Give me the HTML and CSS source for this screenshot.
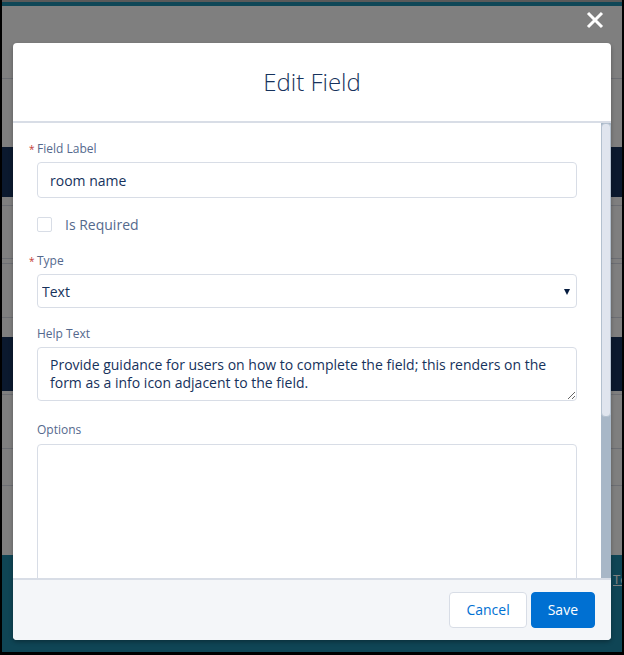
FILE: index.html
```html
<!DOCTYPE html>
<html lang="en">
<head>
<meta charset="utf-8">
<title>Edit Field</title>
<link rel="stylesheet" href="styles.css">
</head>
<body>
<div class="screen">
  <div class="page">
    <div class="pg-top"></div>
    <div class="pg-accent"></div>
    <div class="pg-row h72 lined"></div>
    <div class="pg-row h68"></div>
    <div class="pg-dark h50"></div>
    <div class="pg-row h8 lined"></div>
    <div class="pg-row h52 lined"></div>
    <div class="pg-row h4 lined"></div>
    <div class="pg-row h53 lined"></div>
    <div class="pg-row h19"></div>
    <div class="pg-dark h54"></div>
    <div class="pg-row h3 lined"></div>
    <div class="pg-row h53 lined"></div>
    <div class="pg-row h36 lined"></div>
    <div class="pg-row h69"></div>
    <div class="pg-footer"><a class="pg-link" href="#">Te</a></div>
    <div class="backdrop"></div>
  </div>

  <button class="modal-close" type="button" aria-label="Close">
    <svg width="18" height="18" viewBox="0 0 18 18" aria-hidden="true">
      <path d="M2 2 L16 16 M16 2 L2 16" stroke="#ffffff" stroke-width="3" fill="none"/>
    </svg>
  </button>

  <section class="modal" role="dialog" aria-labelledby="modal-title">
    <header class="modal-header">
      <h2 id="modal-title" class="modal-title">Edit Field</h2>
    </header>
    <div class="modal-body">
      <div class="modal-scroll">
        <div class="form">
          <label class="label" for="f-label"><abbr class="required" title="required">*</abbr>Field Label</label>
          <input id="f-label" class="input" type="text" value="room name">

          <div class="checkbox-row">
            <input id="f-req" class="checkbox" type="checkbox">
            <label for="f-req" class="checkbox-label">Is Required</label>
          </div>

          <label class="label gap-type" for="f-type"><abbr class="required" title="required">*</abbr>Type</label>
          <div class="select-wrap">
            <select id="f-type" class="select">
              <option>Text</option>
            </select>
            <span class="select-arrow"></span>
          </div>

          <label class="label gap-help" for="f-help">Help Text</label>
          <textarea id="f-help" class="textarea help">Provide guidance for users on how to complete the field; this renders on the form as a info icon adjacent to the field.</textarea>

          <label class="label gap-options" for="f-options">Options</label>
          <textarea id="f-options" class="textarea options"></textarea>
        </div>
      </div>
      <div class="scrollbar" aria-hidden="true">
        <div class="scrollbar-thumb"></div>
      </div>
    </div>
    <footer class="modal-footer">
      <button class="btn btn-neutral" type="button">Cancel</button>
      <button class="btn btn-brand" type="button">Save</button>
    </footer>
  </section>
</div>
</body>
</html>
```

FILE: styles.css
```css
html, body {
  margin: 0;
  padding: 0;
}

body {
  background: #000;
  font-family: "Open Sans", "Liberation Sans", sans-serif;
}

.screen {
  position: relative;
  width: 624px;
  height: 655px;
  box-sizing: border-box;
  padding: 0 2px 3px 2px;
  overflow: hidden;
}

/* ---------- page behind the modal ---------- */
.page {
  position: relative;
  height: 652px;
  background: #fff;
  display: flex;
  flex-direction: column;
}

.pg-top { height: 2px; background: #b4b4b4; flex: none; }
.pg-accent { height: 4px; background: #1f8fae; flex: none; }
.pg-row { flex: none; background: #fff; }
.pg-row.lined { border-bottom: 1px solid #d8dde6; }
.pg-dark { flex: none; background: #16335c; }

.h3 { height: 3px; }
.h4 { height: 4px; }
.h8 { height: 8px; }
.h19 { height: 19px; }
.h36 { height: 36px; }
.h50 { height: 50px; }
.h52 { height: 52px; }
.h53 { height: 53px; }
.h54 { height: 54px; }
.h68 { height: 68px; }
.h69 { height: 69px; }
.h72 { height: 72px; }

.pg-footer {
  flex: 1;
  background: #1e8aab;
  padding: 12px 0 0 611px;
  white-space: nowrap;
  overflow: hidden;
}

.pg-link {
  color: #fff;
  font-size: 13px;
  text-decoration: underline;
}

.backdrop {
  position: absolute;
  inset: 0;
  background: rgba(0, 0, 0, 0.5);
}

/* ---------- close button ---------- */
.modal-close {
  position: absolute;
  left: 586px;
  top: 11px;
  width: 18px;
  height: 18px;
  padding: 0;
  border: 0;
  background: transparent;
  display: flex;
}

/* ---------- modal ---------- */
.modal {
  position: absolute;
  left: 13px;
  top: 43px;
  width: 598px;
  height: 597px;
  background: #fff;
  border-radius: 4px;
  display: flex;
  flex-direction: column;
  overflow: hidden;
  box-shadow: 0 2px 4px rgba(0, 0, 0, 0.3);
}

.modal-header {
  flex: none;
  height: 78px;
  border-bottom: 2px solid #d8dde6;
  display: flex;
  align-items: center;
  justify-content: center;
}

.modal-title {
  margin: 0;
  font-size: 24px;
  line-height: 30px;
  font-weight: 300;
  color: #16325c;
}

.modal-body {
  flex: 1;
  min-height: 0;
  display: flex;
}

.modal-scroll {
  flex: 1;
  min-width: 0;
  overflow: hidden;
}

.scrollbar {
  flex: none;
  width: 10px;
  background: #a8b7c7;
  display: flex;
  flex-direction: column;
}

.scrollbar-thumb {
  height: 294px;
  box-sizing: border-box;
  background: #e0e5ee;
  border: 1px solid #b4c1cf;
  border-radius: 4px;
}

.form {
  padding: 17px 24px 23px 24px;
  display: flex;
  flex-direction: column;
}

.label {
  display: block;
  font-size: 12px;
  line-height: 18px;
  color: #54698d;
  margin-bottom: 4px;
}

.required {
  display: inline-block;
  width: 8px;
  margin-left: -8px;
  font-size: 10px;
  color: #c23934;
  text-decoration: none;
  border: 0;
}

.gap-type { margin-top: 20px; }
.gap-help { margin-top: 17px; }
.gap-options { margin-top: 20px; margin-bottom: 5px; }

.input {
  box-sizing: border-box;
  height: 36px;
  width: 100%;
  margin: 0;
  padding: 0 12px;
  border: 1px solid #d8dde6;
  border-radius: 4px;
  font-family: inherit;
  font-size: 14px;
  color: #16325c;
  background: #fff;
}

.checkbox-row {
  margin-top: 19px;
  height: 15px;
  display: flex;
  align-items: center;
  gap: 13px;
}

.checkbox {
  appearance: none;
  -webkit-appearance: none;
  margin: 0;
  width: 15px;
  height: 15px;
  border: 1px solid #d8dde6;
  border-radius: 2px;
  background: #fff;
  flex: none;
}

.checkbox-label {
  font-size: 14px;
  line-height: 20px;
  color: #54698d;
}

.select-wrap {
  position: relative;
}

.select {
  appearance: none;
  -webkit-appearance: none;
  box-sizing: border-box;
  display: block;
  width: 100%;
  height: 34px;
  margin: 0;
  padding: 0 24px 0 4px;
  border: 1px solid #d8dde6;
  border-radius: 4px;
  background: #fff;
  font-family: inherit;
  font-size: 14px;
  color: #16325c;
}

.select-arrow {
  position: absolute;
  right: 7px;
  top: 15px;
  width: 0;
  height: 0;
  border-left: 3px solid transparent;
  border-right: 3px solid transparent;
  border-top: 6px solid #061c3f;
}

.textarea {
  box-sizing: border-box;
  display: block;
  width: 100%;
  margin: 0;
  padding: 8px 12px;
  border: 1px solid #d8dde6;
  border-radius: 4px;
  font-family: inherit;
  font-size: 14px;
  line-height: 18px;
  color: #16325c;
  background: #fff;
}

.textarea.help { height: 54px; }
.textarea.options { height: 360px; resize: none; }

.modal-footer {
  flex: none;
  height: 60px;
  border-top: 2px solid #d8dde6;
  background: #f4f6f9;
  display: flex;
  align-items: center;
  justify-content: flex-end;
  gap: 4px;
  padding: 0 16px;
}

.btn {
  height: 36px;
  padding: 0 16px;
  border-radius: 4px;
  font-family: inherit;
  font-size: 14px;
  line-height: 34px;
  cursor: pointer;
}

.btn-neutral {
  background: #fff;
  border: 1px solid #d8dde6;
  color: #0070d2;
}

.btn-brand {
  background: #0070d2;
  border: 1px solid #0070d2;
  color: #fff;
}
```
